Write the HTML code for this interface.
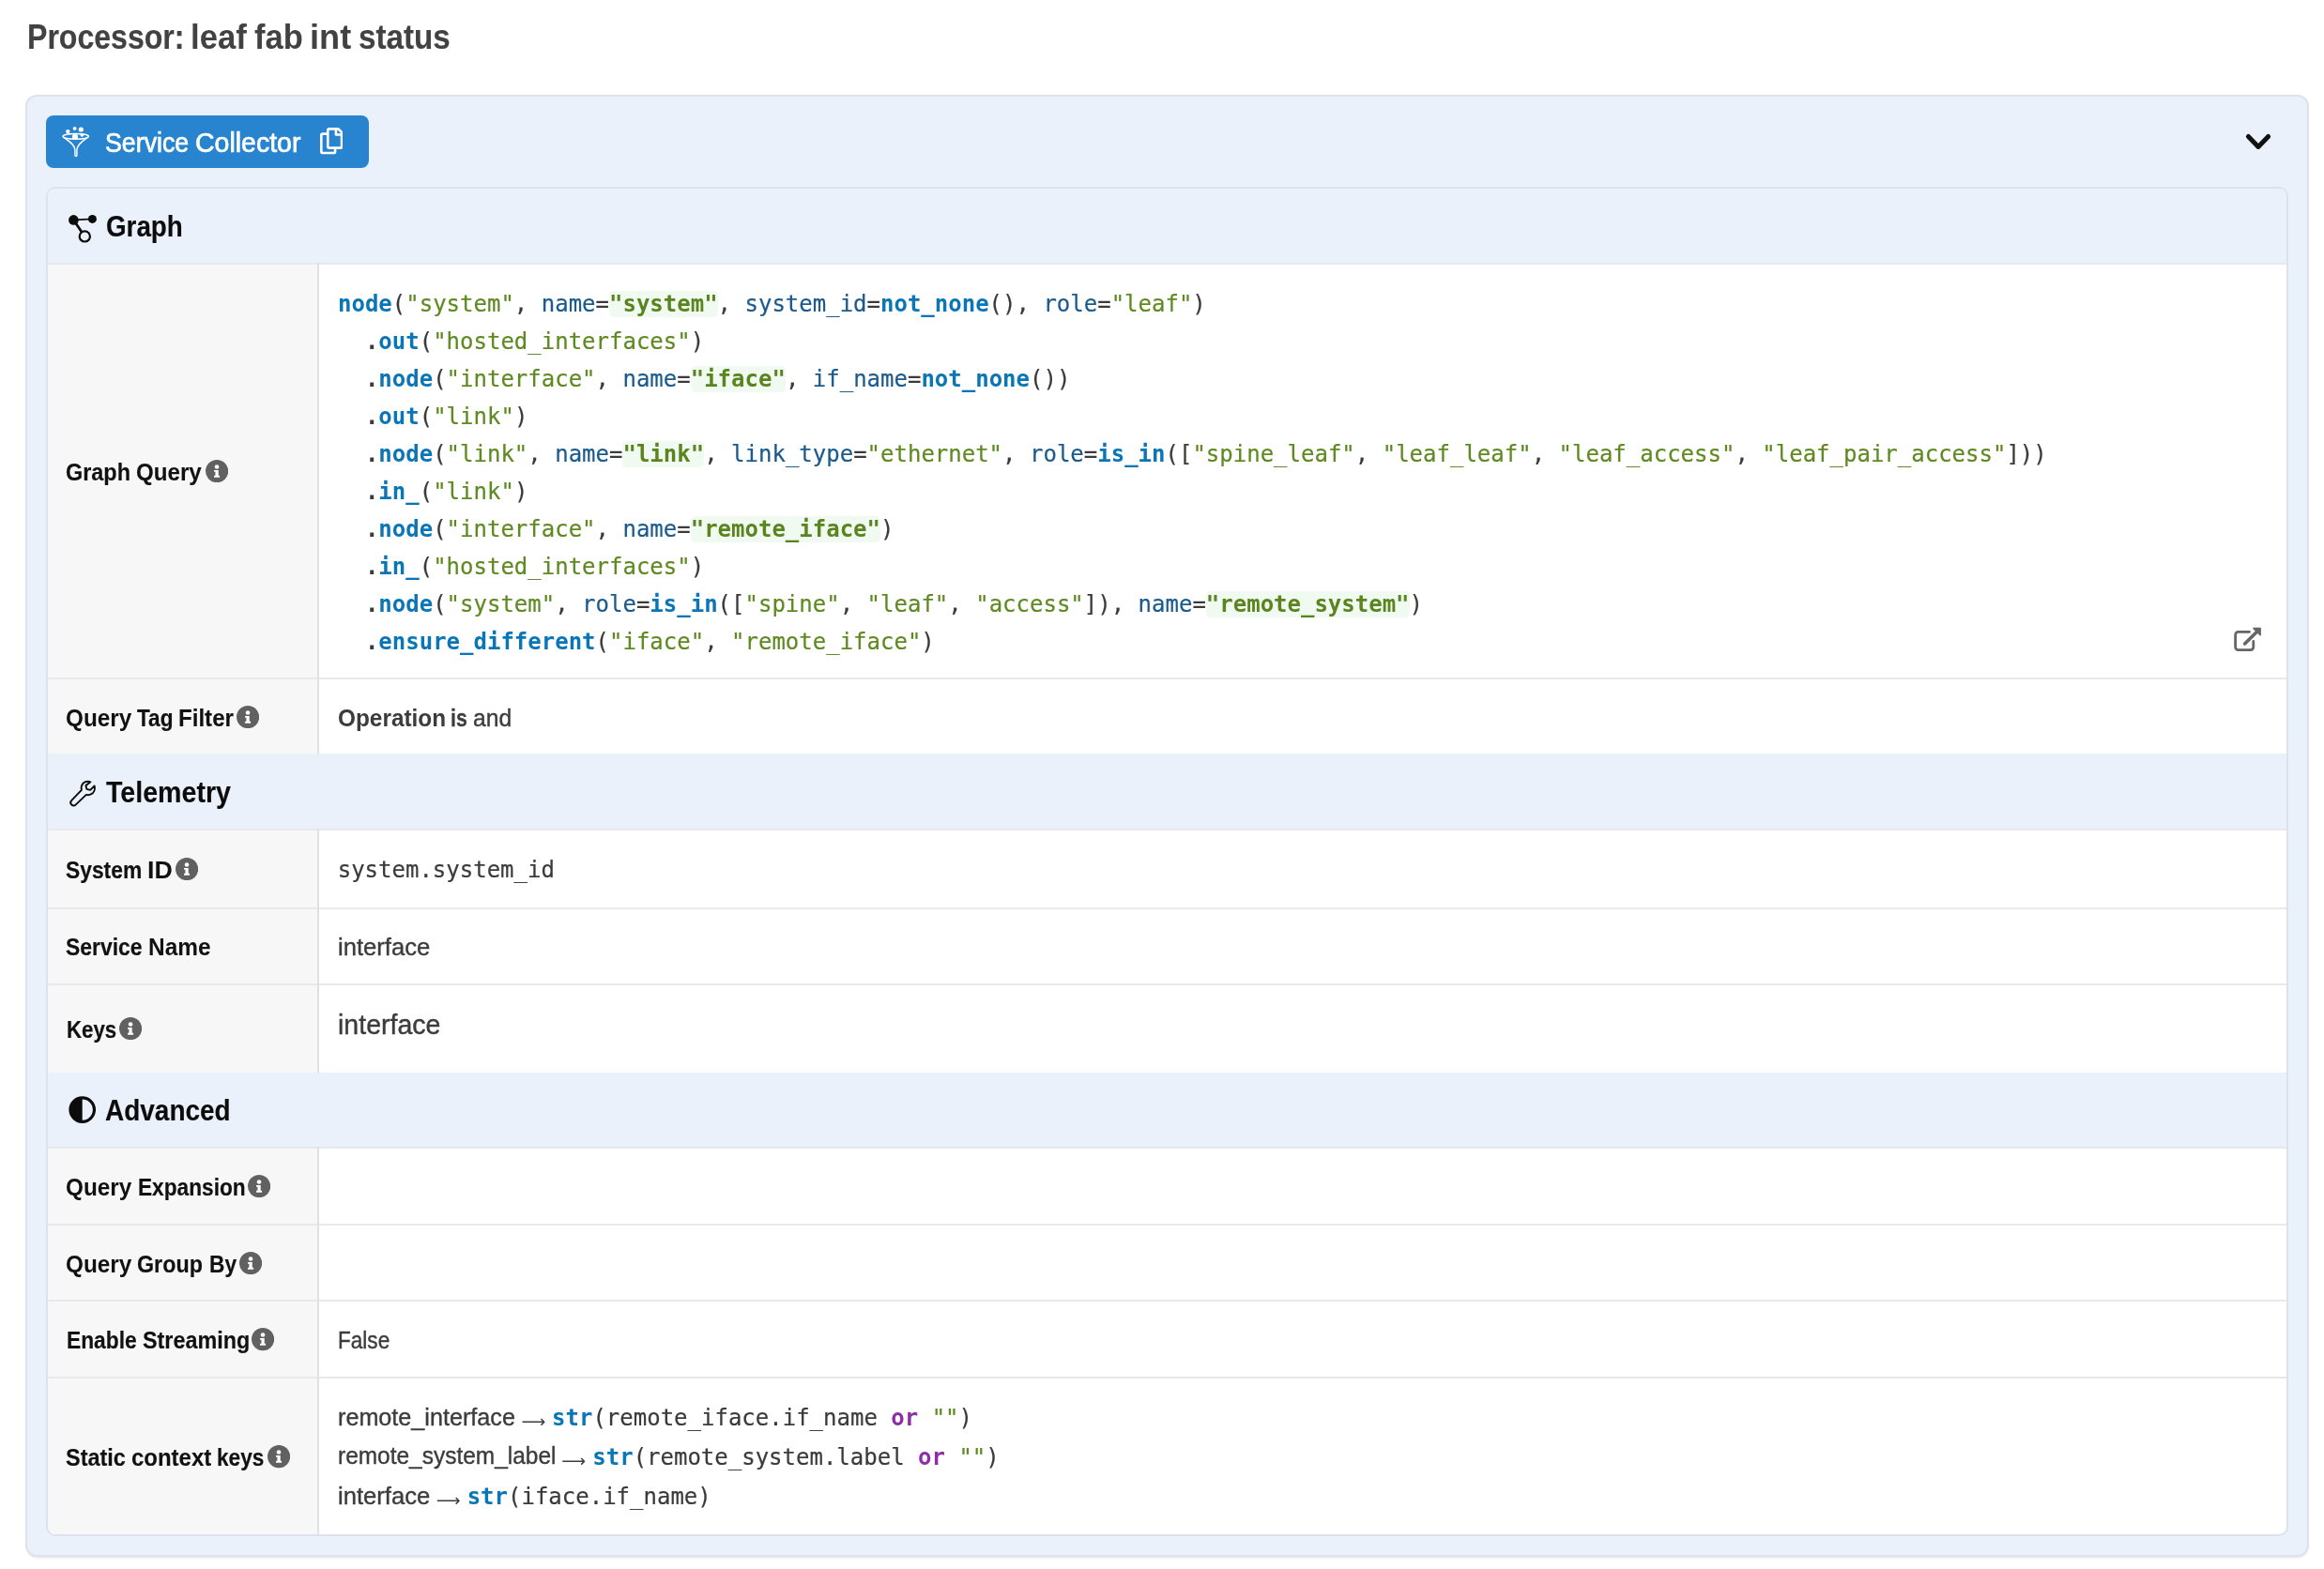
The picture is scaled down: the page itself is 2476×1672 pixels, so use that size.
<!DOCTYPE html>
<html lang="en"><head><meta charset="utf-8"><title>Processor: leaf fab int status</title>
<style>
html,body{margin:0;padding:0;background:#fff;}
body{will-change:transform;width:2476px;height:1672px;position:relative;overflow:hidden;font-family:"Liberation Sans",sans-serif;}
.abs{position:absolute;}
.t{position:absolute;white-space:pre;font-family:"Liberation Sans",sans-serif;transform-origin:0 0;}
.w{display:inline-block;transform-origin:0 0;white-space:pre;}
.m{font-family:"DejaVu Sans Mono","Liberation Mono",monospace;}
.outer{position:absolute;left:27px;top:101px;width:2433px;height:1558px;box-sizing:border-box;border:2px solid #dde2ec;border-radius:12px;background:#ebf1fa;box-shadow:0 3px 3px -2px rgba(34,36,38,.13);}
.inner{position:absolute;left:49px;top:199px;width:2389px;height:1438px;box-sizing:border-box;border:2px solid #dde2eb;border-radius:10px;background:#fff;overflow:hidden;}
.btn{position:absolute;left:49px;top:123px;width:344px;height:56px;border-radius:8px;background:#2884cf;}
.hd{position:absolute;left:0;width:2385px;background:#ebf1fa;}
.lab{position:absolute;left:0;width:287px;background:#f7f7f7;}
.vd{position:absolute;left:287px;width:2px;background:#dde1e9;}
.hb{position:absolute;left:0;width:2385px;height:2px;background:rgba(34,36,38,.1);}
pre.code b{font-weight:bold;color:#3a3a3a;-webkit-text-stroke:0;}
pre.code{position:absolute;margin:0;font-family:"DejaVu Sans Mono","Liberation Mono",monospace;font-size:24px;line-height:40px;color:#3a3a3a;white-space:pre;-webkit-text-stroke:0.2px;}
.k{color:#0a76b7;font-weight:bold;-webkit-text-stroke:0;}
.a{color:#1a5a8c;}
.s{color:#5f8a22;}
.n{color:#5a851e;font-weight:bold;-webkit-text-stroke:0;background:#f1faf1;border-radius:5px;}
.o{color:#8e2fa8;font-weight:bold;-webkit-text-stroke:0;}
.arw{font-family:"DejaVu Sans",sans-serif;font-size:18px;line-height:30px;height:30px;color:#3c3c3c;text-align:center;}
</style></head><body>

<div class="t" style="left:29.05px;top:22.39px;font-size:36.4px;line-height:36.4px;font-weight:700;color:#424242;word-spacing:-10.113px;"><span class="w" style="width:174.40px;transform:scaleX(0.8809);-webkit-text-stroke:0.18px;">Processor:</span> <span class="w" style="width:67.93px;transform:scaleX(0.9543);">leaf</span> <span class="w" style="width:58.86px;transform:scaleX(0.9487);">fab</span> <span class="w" style="width:51.82px;transform:scaleX(0.9936);">int</span> <span class="w" style="transform:scaleX(0.9121);-webkit-text-stroke:0.13px;">status</span></div>
<div class="outer"></div>
<div class="btn"></div>
<svg class="abs" style="left:64px;top:133px" width="34" height="36" viewBox="0 0 34 36" fill="none" stroke="#fff" stroke-width="1.4" stroke-linejoin="round">
<ellipse cx="16.700" cy="12.350" rx="13.700" ry="2.900"/>
<path d="M3 12.700C8.500 16.800 15.500 20.500 15.900 26.500V32.600a1 1 0 0 0 2 0V26.500C18.300 20.500 25 16.800 30.400 12.700"/>
<g fill="#fff" stroke="none"><circle cx="8.300" cy="7.100" r="2.200"/><circle cx="15.600" cy="3.900" r="1.900"/><circle cx="22.300" cy="5" r="2.600"/><circle cx="16" cy="12.900" r="3.100"/><circle cx="23.300" cy="11" r="1.800"/></g>
</svg>
<div class="t" style="left:112.18px;top:137.72px;font-size:28.8px;line-height:28.8px;font-weight:400;color:#fff;word-spacing:-8.002px;-webkit-text-stroke:0.7px #fff;"><span class="w" style="width:96.31px;transform:scaleX(0.9292);">Service</span> <span class="w" style="transform:scaleX(0.9891);">Collector</span></div>
<svg class="abs" style="left:340.9px;top:136.4px" width="24.35" height="28.3" viewBox="0 0 448 512" preserveAspectRatio="none"><path fill="#fff" d="M433.941 65.941l-51.882-51.882A48 48 0 0 0 348.118 0H176c-26.51 0-48 21.49-48 48v48H48c-26.51 0-48 21.49-48 48v320c0 26.51 21.49 48 48 48h224c26.51 0 48-21.49 48-48v-48h80c26.51 0 48-21.49 48-48V99.882a48 48 0 0 0-14.059-33.941zM266 464H54a6 6 0 0 1-6-6V150a6 6 0 0 1 6-6h74v224c0 26.51 21.49 48 48 48h96v42a6 6 0 0 1-6 6zm128-96H182a6 6 0 0 1-6-6V54a6 6 0 0 1 6-6h106v88c0 13.255 10.745 24 24 24h88v202a6 6 0 0 1-6 6zm6-256h-64V48h9.632c1.591 0 3.117.632 4.243 1.757l48.368 48.368a6 6 0 0 1 1.757 4.243V112z"/></svg>
<svg class="abs" style="left:2390px;top:138px" width="32" height="26" viewBox="0 0 32 26"><path d="M5.4 7.5L16 18.400L26.600 7.5" fill="none" stroke="#111" stroke-width="5" stroke-linecap="round" stroke-linejoin="round"/></svg>
<div class="inner">
<div class="hd" style="top:0px;height:79px"></div>
<div class="hb" style="top:79px"></div>
<div class="lab" style="top:81px;height:440px"></div>
<div class="hb" style="top:521px"></div>
<div class="lab" style="top:523px;height:79px"></div>
<div class="hd" style="top:602px;height:80px"></div>
<div class="hb" style="top:682px"></div>
<div class="lab" style="top:684px;height:82px"></div>
<div class="hb" style="top:766px"></div>
<div class="lab" style="top:768px;height:79px"></div>
<div class="hb" style="top:847px"></div>
<div class="lab" style="top:849px;height:93px"></div>
<div class="hd" style="top:942px;height:79px"></div>
<div class="hb" style="top:1021px"></div>
<div class="lab" style="top:1023px;height:80px"></div>
<div class="hb" style="top:1103px"></div>
<div class="lab" style="top:1105px;height:79px"></div>
<div class="hb" style="top:1184px"></div>
<div class="lab" style="top:1186px;height:80px"></div>
<div class="hb" style="top:1266px"></div>
<div class="lab" style="top:1268px;height:166px"></div>
<div class="vd" style="top:79px;height:523px"></div>
<div class="vd" style="top:682px;height:260px"></div>
<div class="vd" style="top:1021px;height:413px"></div>
</div>
<svg class="abs" style="left:70px;top:226px" width="36" height="36" viewBox="0 0 36 36">
<path d="M8.4 8.4L28.4 7.4" stroke="#0c0c0c" stroke-width="1.7" fill="none"/>
<path d="M8.4 8.4L20.3 25.9" stroke="#0c0c0c" stroke-width="2.7" fill="none"/>
<circle cx="8.4" cy="8.4" r="5.3" fill="#0c0c0c"/><circle cx="28.4" cy="7.4" r="4.5" fill="#0c0c0c"/>
<circle cx="20.3" cy="25.9" r="5.6" fill="#ebf1fa" stroke="#0c0c0c" stroke-width="2.2"/></svg>
<div class="t" style="left:112.83px;top:225.66px;font-size:31px;line-height:31px;font-weight:700;color:#0c0c0c;"><span class="w" style="transform:scaleX(0.8960);-webkit-text-stroke:0.16px;">Graph</span></div>
<svg class="abs" style="left:72px;top:830px" width="32" height="32" viewBox="0 0 32 32" fill="none" stroke="#0c0c0c" stroke-width="2" stroke-linejoin="round" stroke-linecap="round">
<path transform="translate(30 2) scale(.965) translate(-30 -2)" d="M24.2 3.4c-3.6-1.6-7.9-.2-9.6 3.6-.8 1.800-.8 3.500-.3 5.200L3.400 23.600c-1.400 1.400-1.400 3.500-.1 4.800 1.300 1.300 3.400 1.300 4.800-.1L19.500 17.400c1.700.5 3.500.4 5.200-.4 3.500-1.700 5-5.700 3.900-9.300l-4.700 4.500-3.900-1-1-3.900z"/></svg>
<div class="t" style="left:112.81px;top:828.56px;font-size:31px;line-height:31px;font-weight:700;color:#0c0c0c;"><span class="w" style="transform:scaleX(0.9228);-webkit-text-stroke:0.12px;">Telemetry</span></div>
<svg class="abs" style="left:72px;top:1167px" width="32" height="32" viewBox="0 0 32 32">
<circle cx="15.7" cy="15.6" r="12.75" fill="none" stroke="#0c0c0c" stroke-width="3.2"/><path d="M15.7 2.850a12.750 12.750 0 0 0 0 25.500z" fill="#0c0c0c"/></svg>
<div class="t" style="left:111.63px;top:1167.76px;font-size:31px;line-height:31px;font-weight:700;color:#0c0c0c;"><span class="w" style="transform:scaleX(0.9023);-webkit-text-stroke:0.15px;">Advanced</span></div>
<div class="t" style="left:70.16px;top:489.89px;font-size:26px;line-height:26px;font-weight:700;color:#111;word-spacing:-7.224px;"><span class="w" style="width:75.07px;transform:scaleX(0.9010);-webkit-text-stroke:0.15px;">Graph</span> <span class="w" style="transform:scaleX(0.9275);-webkit-text-stroke:0.11px;">Query</span></div>
<div class="t" style="left:69.98px;top:751.79px;font-size:26px;line-height:26px;font-weight:700;color:#111;word-spacing:-7.224px;"><span class="w" style="width:76.25px;transform:scaleX(0.9362);">Query</span> <span class="w" style="width:44.17px;transform:scaleX(0.8686);-webkit-text-stroke:0.20px;">Tag</span> <span class="w" style="transform:scaleX(0.9269);-webkit-text-stroke:0.11px;">Filter</span></div>
<div class="t" style="left:70.10px;top:913.79px;font-size:26px;line-height:26px;font-weight:700;color:#111;word-spacing:-7.224px;"><span class="w" style="width:87.11px;transform:scaleX(0.8776);-webkit-text-stroke:0.18px;">System</span> <span class="w" style="transform:scaleX(1.0296);">ID</span></div>
<div class="t" style="left:70.10px;top:995.99px;font-size:26px;line-height:26px;font-weight:700;color:#111;word-spacing:-7.224px;"><span class="w" style="width:88.17px;transform:scaleX(0.8813);-webkit-text-stroke:0.18px;">Service</span> <span class="w" style="transform:scaleX(0.9409);">Name</span></div>
<div class="t" style="left:70.62px;top:1083.79px;font-size:26px;line-height:26px;font-weight:700;color:#111;"><span class="w" style="transform:scaleX(0.8553);-webkit-text-stroke:0.22px;">Keys</span></div>
<div class="t" style="left:69.98px;top:1251.79px;font-size:26px;line-height:26px;font-weight:700;color:#111;word-spacing:-7.224px;"><span class="w" style="width:76.91px;transform:scaleX(0.9362);">Query</span> <span class="w" style="transform:scaleX(0.8719);-webkit-text-stroke:0.19px;">Expansion</span></div>
<div class="t" style="left:69.98px;top:1333.79px;font-size:26px;line-height:26px;font-weight:700;color:#111;word-spacing:-7.224px;"><span class="w" style="width:76.49px;transform:scaleX(0.9362);">Query</span> <span class="w" style="width:76.52px;transform:scaleX(0.8957);-webkit-text-stroke:0.16px;">Group</span> <span class="w" style="transform:scaleX(0.8732);-webkit-text-stroke:0.19px;">By</span></div>
<div class="t" style="left:70.58px;top:1414.99px;font-size:26px;line-height:26px;font-weight:700;color:#111;word-spacing:-7.224px;"><span class="w" style="width:80.95px;transform:scaleX(0.8759);-webkit-text-stroke:0.19px;">Enable</span> <span class="w" style="transform:scaleX(0.8981);-webkit-text-stroke:0.15px;">Streaming</span></div>
<div class="t" style="left:70.08px;top:1539.99px;font-size:26px;line-height:26px;font-weight:700;color:#111;word-spacing:-7.224px;"><span class="w" style="width:69.88px;transform:scaleX(0.9023);-webkit-text-stroke:0.15px;">Static</span> <span class="w" style="width:91.40px;transform:scaleX(0.9219);-webkit-text-stroke:0.12px;">context</span> <span class="w" style="transform:scaleX(0.8693);-webkit-text-stroke:0.20px;">keys</span></div>
<svg class="abs" style="left:218.60px;top:490.30px" viewBox="0 0 24 24" width="24.2" height="24.2"><circle cx="12" cy="12" r="12" fill="#616161"/><circle cx="11.95" cy="7.45" r="2.3" fill="#fff"/><path fill="#fff" d="M9 10.800H13.600V16.500H14.950V18.700H9V16.500H10.350V12.700H9z"/></svg>
<svg class="abs" style="left:251.90px;top:752.30px" viewBox="0 0 24 24" width="24.2" height="24.2"><circle cx="12" cy="12" r="12" fill="#616161"/><circle cx="11.95" cy="7.45" r="2.3" fill="#fff"/><path fill="#fff" d="M9 10.800H13.600V16.500H14.950V18.700H9V16.500H10.350V12.700H9z"/></svg>
<svg class="abs" style="left:187.00px;top:914.30px" viewBox="0 0 24 24" width="24.2" height="24.2"><circle cx="12" cy="12" r="12" fill="#616161"/><circle cx="11.95" cy="7.45" r="2.3" fill="#fff"/><path fill="#fff" d="M9 10.800H13.600V16.500H14.950V18.700H9V16.500H10.350V12.700H9z"/></svg>
<svg class="abs" style="left:126.70px;top:1084.30px" viewBox="0 0 24 24" width="24.2" height="24.2"><circle cx="12" cy="12" r="12" fill="#616161"/><circle cx="11.95" cy="7.45" r="2.3" fill="#fff"/><path fill="#fff" d="M9 10.800H13.600V16.500H14.950V18.700H9V16.500H10.350V12.700H9z"/></svg>
<svg class="abs" style="left:264.30px;top:1252.30px" viewBox="0 0 24 24" width="24.2" height="24.2"><circle cx="12" cy="12" r="12" fill="#616161"/><circle cx="11.95" cy="7.45" r="2.3" fill="#fff"/><path fill="#fff" d="M9 10.800H13.600V16.500H14.950V18.700H9V16.500H10.350V12.700H9z"/></svg>
<svg class="abs" style="left:255.00px;top:1334.30px" viewBox="0 0 24 24" width="24.2" height="24.2"><circle cx="12" cy="12" r="12" fill="#616161"/><circle cx="11.95" cy="7.45" r="2.3" fill="#fff"/><path fill="#fff" d="M9 10.800H13.600V16.500H14.950V18.700H9V16.500H10.350V12.700H9z"/></svg>
<svg class="abs" style="left:267.50px;top:1415.40px" viewBox="0 0 24 24" width="24.2" height="24.2"><circle cx="12" cy="12" r="12" fill="#616161"/><circle cx="11.95" cy="7.45" r="2.3" fill="#fff"/><path fill="#fff" d="M9 10.800H13.600V16.500H14.950V18.700H9V16.500H10.350V12.700H9z"/></svg>
<svg class="abs" style="left:284.70px;top:1540.40px" viewBox="0 0 24 24" width="24.2" height="24.2"><circle cx="12" cy="12" r="12" fill="#616161"/><circle cx="11.95" cy="7.45" r="2.3" fill="#fff"/><path fill="#fff" d="M9 10.800H13.600V16.500H14.950V18.700H9V16.500H10.350V12.700H9z"/></svg>
<pre class="code" style="left:360px;top:304px"><span class="k">node</span>(<span class="s">"system"</span>, <span class="a">name</span>=<span class="n">"system"</span>, <span class="a">system_id</span>=<span class="k">not_none</span>(), <span class="a">role</span>=<span class="s">"leaf"</span>)
  <b>.</b><span class="k">out</span>(<span class="s">"hosted_interfaces"</span>)
  <b>.</b><span class="k">node</span>(<span class="s">"interface"</span>, <span class="a">name</span>=<span class="n">"iface"</span>, <span class="a">if_name</span>=<span class="k">not_none</span>())
  <b>.</b><span class="k">out</span>(<span class="s">"link"</span>)
  <b>.</b><span class="k">node</span>(<span class="s">"link"</span>, <span class="a">name</span>=<span class="n">"link"</span>, <span class="a">link_type</span>=<span class="s">"ethernet"</span>, <span class="a">role</span>=<span class="k">is_in</span>([<span class="s">"spine_leaf"</span>, <span class="s">"leaf_leaf"</span>, <span class="s">"leaf_access"</span>, <span class="s">"leaf_pair_access"</span>]))
  <b>.</b><span class="k">in_</span>(<span class="s">"link"</span>)
  <b>.</b><span class="k">node</span>(<span class="s">"interface"</span>, <span class="a">name</span>=<span class="n">"remote_iface"</span>)
  <b>.</b><span class="k">in_</span>(<span class="s">"hosted_interfaces"</span>)
  <b>.</b><span class="k">node</span>(<span class="s">"system"</span>, <span class="a">role</span>=<span class="k">is_in</span>([<span class="s">"spine"</span>, <span class="s">"leaf"</span>, <span class="s">"access"</span>]), <span class="a">name</span>=<span class="n">"remote_system"</span>)
  <b>.</b><span class="k">ensure_different</span>(<span class="s">"iface"</span>, <span class="s">"remote_iface"</span>)</pre>
<svg class="abs" style="left:2378px;top:666px" width="34" height="32" viewBox="0 0 34 32" fill="none" stroke="#666" stroke-linecap="round" stroke-linejoin="round">
<path d="M18.5 7.4H6.600a3 3 0 0 0 -3 3v13.200a3 3 0 0 0 3 3h13.200a3 3 0 0 0 3 -3V17.500" stroke-width="2.8"/>
<path d="M13.600 20.100L28 5.700" stroke-width="3.600"/>
<path d="M23 3.600h7.100v7.100z" fill="#666" stroke-width="1.600"/></svg>
<div class="t" style="left:359.93px;top:751.89px;font-size:26px;line-height:26px;font-weight:700;color:#3c3c3c;word-spacing:-7.224px;"><span class="w" style="width:120.42px;transform:scaleX(0.9374);">Operation</span> <span class="w" style="width:23.86px;transform:scaleX(0.8204);-webkit-text-stroke:0.27px;">is</span> <span class="w" style="transform:scaleX(0.9506);font-weight:400;-webkit-text-stroke:0.4px #3c3c3c;">and</span></div>
<div class="t m" style="left:359.72px;top:914.90px;font-size:24px;line-height:24px;font-weight:400;color:#3a3a3a;-webkit-text-stroke:0.2px;">system.system_id</div>
<div class="t" style="left:359.79px;top:995.59px;font-size:26px;line-height:26px;font-weight:400;color:#3c3c3c;-webkit-text-stroke:0.4px #3c3c3c;"><span class="w" style="transform:scaleX(0.9858);">interface</span></div>
<div class="t" style="left:359.77px;top:1078.42px;font-size:28.8px;line-height:28.8px;font-weight:400;color:#3c3c3c;-webkit-text-stroke:0.4px #3c3c3c;"><span class="w" style="transform:scaleX(0.9909);">interface</span></div>
<div class="t" style="left:360.22px;top:1414.89px;font-size:26px;line-height:26px;font-weight:400;color:#3c3c3c;-webkit-text-stroke:0.4px #3c3c3c;"><span class="w" style="transform:scaleX(0.8684);">False</span></div>
<div class="t" style="left:359.71px;top:1496.59px;font-size:26px;line-height:26px;font-weight:400;color:#3c3c3c;-webkit-text-stroke:0.4px #3c3c3c;"><span class="w" style="transform:scaleX(0.9681);">remote_interface</span></div>
<div class="t arw" style="left:555.50px;top:1499.60px;width:24.10px">⟶</div>
<div class="t m" style="left:588.07px;top:1499.30px;font-size:24px;line-height:24px;font-weight:400;color:#3a3a3a;-webkit-text-stroke:0.2px;"><span class="k">str</span>(remote_iface.if_name <span class="o">or</span> <span class="s">""</span>)</div>
<div class="t" style="left:359.76px;top:1538.49px;font-size:26px;line-height:26px;font-weight:400;color:#3c3c3c;-webkit-text-stroke:0.4px #3c3c3c;"><span class="w" style="transform:scaleX(0.9407);">remote_system_label</span></div>
<div class="t arw" style="left:598.30px;top:1541.50px;width:24.50px">⟶</div>
<div class="t m" style="left:631.27px;top:1541.20px;font-size:24px;line-height:24px;font-weight:400;color:#3a3a3a;-webkit-text-stroke:0.2px;"><span class="k">str</span>(remote_system.label <span class="o">or</span> <span class="s">""</span>)</div>
<div class="t" style="left:359.79px;top:1580.69px;font-size:26px;line-height:26px;font-weight:400;color:#3c3c3c;-webkit-text-stroke:0.4px #3c3c3c;"><span class="w" style="transform:scaleX(0.9847);">interface</span></div>
<div class="t arw" style="left:464.70px;top:1583.70px;width:24.80px">⟶</div>
<div class="t m" style="left:497.67px;top:1583.40px;font-size:24px;line-height:24px;font-weight:400;color:#3a3a3a;-webkit-text-stroke:0.2px;"><span class="k">str</span>(iface.if_name)</div>
</body></html>
